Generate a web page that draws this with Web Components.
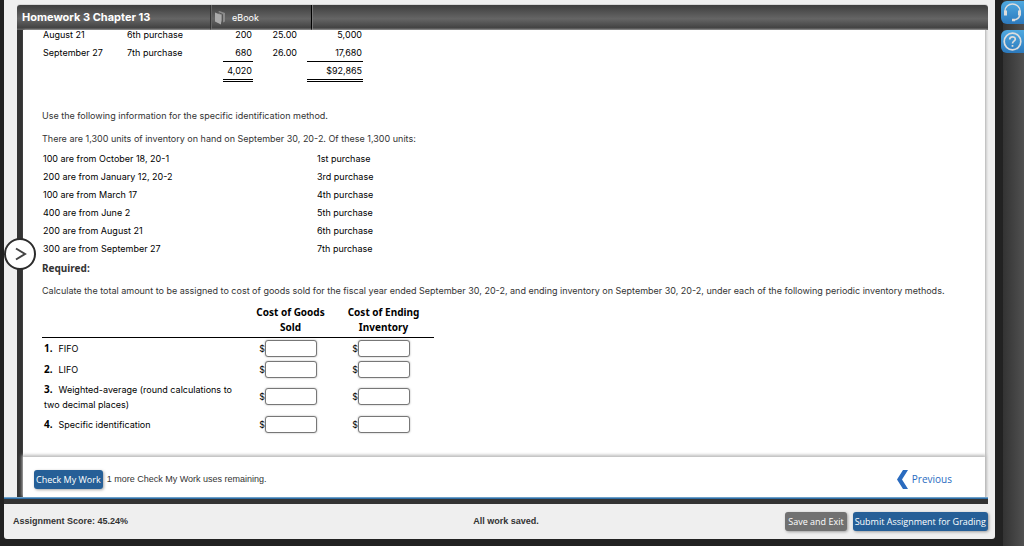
<!DOCTYPE html>
<html lang="en">
<head>
<meta charset="utf-8">
<title>Homework 3 Chapter 13</title>
<style>
html, body { height: 100%; margin: 0; }
body { background: #222; font: 9px/15px Inter, Verdana, sans-serif; color: #000; overflow: hidden; }
</style>
</head>
<body>
<app-shell>
  <assignment-panel>
    <title-bar slot="title" heading="Homework 3 Chapter 13"></title-bar>
    <purchase-table></purchase-table>
    <problem-text>Use the following information for the specific identification method.</problem-text>
    <problem-text>There are 1,300 units of inventory on hand on September 30, 20-2. Of these 1,300 units:</problem-text>
    <unit-table></unit-table>
    <problem-text strong>Required:</problem-text>
    <problem-text>Calculate the total amount to be assigned to cost of goods sold for the fiscal year ended September 30, 20-2, and ending inventory on September 30, 20-2, under each of the following periodic inventory methods.</problem-text>
    <answer-table></answer-table>
    <check-bar slot="footer"></check-bar>
  </assignment-panel>
  <status-bar slot="status"></status-bar>
  <help-rail slot="rail"></help-rail>
</app-shell>
<script>
const buttonCss = `
  button { font: 9px/19px "Open Sans", sans-serif; color: #fff; background: #265f97; border: 0; border-radius: 3px;
    height: 19px; padding: 0 2px; white-space: nowrap; box-shadow: 1px 1px 3px rgba(0,0,0,.35); }`;

function define(name, html) {
  customElements.define(name, class extends HTMLElement {
    constructor() {
      super();
      this.attachShadow({ mode: "open" }).innerHTML = typeof html === "function" ? html(this) : html;
    }
  });
}

define("app-shell", `
<style>
  :host { display: grid; grid-template-columns: 1fr 29px; height: 100vh; }
  .window { display: flex; flex-direction: column; min-width: 0; min-height: 0; margin: 0 0 7px 4px;
    background: #efefef; border-radius: 0 0 3px 3px; }
</style>
<div class="window"><slot></slot><slot name="status"></slot></div>
<slot name="rail"></slot>`);

define("assignment-panel", `
<style>
  :host { display: flex; flex-direction: column; flex: 1; min-height: 0; margin: 5px 7px 0 0; position: relative; }
  .body { display: flex; flex-direction: column; flex: 1; min-height: 0; margin-left: 13px; border-left: 6px solid #333; }
  .page { display: flex; flex-direction: column; flex: 1; min-height: 0; background: #fff; border-right: 1px solid #c4c4c4;
    margin-right: 2px; box-shadow: 1px 0 2px #ccc; }
  .scroll { flex: 1; min-height: 0; overflow: hidden; padding: 0 19px; }
  .content { margin-top: -5px; }
  .edge { height: 2px; background: #2f6ea6; border-top: 1px solid #6ea0c8; box-sizing: border-box; }
  .base { height: 5px; background: #333; }
  .toggle { position: absolute; left: 0; top: calc(50% - 17px); width: 32px; height: 32px; padding: 0; display: grid; place-items: center;
    border: 2px solid #2c2c2c; border-radius: 50%; background: #fff; }
</style>
<slot name="title"></slot>
<div class="body"><div class="page">
  <div class="scroll"><div class="content"><slot></slot></div></div>
  <slot name="footer"></slot>
</div></div>
<div class="edge"></div><div class="base"></div>
<button class="toggle" aria-label="Expand navigation">
  <svg width="14" height="16" viewBox="0 0 14 16" fill="none" stroke="#444" stroke-width="2"><path d="M3 2.500 12 8 3 13.500"/></svg>
</button>`);

define("title-bar", el => `
<style>
  :host { display: flex; height: 25px; margin-left: 13px; border-radius: 3px 3px 0 0; color: #fff;
    background: linear-gradient(#3e3e3e, #656565 55%, #444 90%, #666); box-shadow: 0 -1px 0 #d8d8d8; }
  h1 { flex: none; width: 188px; margin: 0; padding-left: 5px; font: bold 11px/25px Inter, Verdana, sans-serif; white-space: nowrap; }
  a { flex: none; box-sizing: border-box; width: 102px; display: flex; align-items: center; gap: 6px; padding-left: 4px; color: #fff;
    text-decoration: none; border-left: 1px solid #333; border-right: 1px solid #000; box-shadow: inset 1px 0 #666, 1px 0 #777; }
</style>
<h1>${el.getAttribute("heading")}</h1>
<a href="#ebook"><svg width="11" height="14" viewBox="0 0 11 14"><path d="M3 1 4.500 0 10 2v8.500L7 12z" fill="#8a8a8a"/><path d="M0 1.500 6 4v9.500L0 10.500z" fill="#aaa"/><path d="M2 1 7.500 3.300V12.500" fill="none" stroke="#555"/></svg>eBook</a>`);

const tableCss = `
  table { border-collapse: collapse; table-layout: fixed; }
  td, th { padding: 0 1px; height: 18px; line-height: 15px; text-align: left; font-weight: normal; }`;

define("purchase-table", `
<style>
  :host { display: block; margin-bottom: 26px; } ${tableCss}
  table { width: 321px; }
  .n { text-align: right; }
  .total .sum { height: 17px; border-top: 1px solid #000; border-bottom: 3px double #000; }
</style>
<table>
  <colgroup><col style="width:84px"><col style="width:97px"><col style="width:30px"><col style="width:45px"><col style="width:9px"><col style="width:56px"></colgroup>
  <tr><td>August 21</td><td>6th purchase</td><td class="n">200</td><td class="n">25.00</td><td></td><td class="n">5,000</td></tr>
  <tr><td>September 27</td><td>7th purchase</td><td class="n">680</td><td class="n">26.00</td><td></td><td class="n">17,680</td></tr>
  <tr class="total"><td></td><td></td><td class="n sum">4,020</td><td></td><td></td><td class="n sum">$92,865</td></tr>
</table>`);

define("problem-text", `
<style>
  :host { display: block; margin-bottom: 8px; color: #333; }
  :host([strong]) { font: bold 10px/15px "Noto Sans", sans-serif; margin: 4px 0 7px; }
  p { margin: 0; }
</style><p><slot></slot></p>`);

define("unit-table", `
<style>
  :host { display: block; margin-top: -5px; } ${tableCss}
  table { width: 400px; }
</style>
<table>
  <colgroup><col style="width:274px"><col></colgroup>
  ${[["100 are from October 18, 20-1", "1st"], ["200 are from January 12, 20-2", "3rd"], ["100 are from March 17", "4th"],
     ["400 are from June 2", "5th"], ["200 are from August 21", "6th"], ["300 are from September 27", "7th"]]
    .map(([units, nth]) => `<tr><td>${units}</td><td>${nth} purchase</td></tr>`).join("")}
</table>`);

define("answer-table", `
<style>
  :host { display: block; margin-top: -1px; } ${tableCss}
  table { width: 392px; }
  thead th { height: 32px; padding: 0; text-align: center; font: bold 10px/15px "Noto Sans", sans-serif; vertical-align: top; border-bottom: 1px solid #000; }
  thead th:last-child { padding-right: 4px; }
  tbody th { padding: 0 2px; }
  tbody td { padding: 0 0 0 16px; }
  tbody tr { height: 21px; }
  tbody tr.tall { height: 34px; }
  label { display: flex; align-items: center; justify-content: flex-end; width: 57px; }
  input { box-sizing: border-box; width: 52px; height: 17px; border: 1px solid #777; border-radius: 3px; padding: 0 3px; background: #fff;
    font: inherit; box-shadow: 0 0 2px #aaa; }
  b { margin-right: 6px; font: bold 10px/15px "Noto Sans", sans-serif; }
</style>
<table>
  <colgroup><col style="width:202px"><col style="width:93px"><col style="width:97px"></colgroup>
  <thead><tr><th></th><th>Cost of Goods<br>Sold</th><th>Cost of Ending<br>Inventory</th></tr></thead>
  <tbody>
  ${["FIFO", "LIFO", "Weighted-average (round calculations to<br>two decimal places)", "Specific identification"]
    .map((m, i) => `<tr${i === 2 ? ' class="tall"' : ""}><th><b>${i + 1}.</b>${m}</th>
      <td><label>$<input type="text" aria-label="Cost of goods sold, method ${i + 1}"></label></td>
      <td><label>$<input type="text" aria-label="Ending inventory, method ${i + 1}"></label></td></tr>`).join("")}
  </tbody>
</table>`);

define("check-bar", `
<style>
  :host { display: flex; align-items: center; height: 40px; padding: 5px 33px 0 11px; box-sizing: border-box; gap: 4px;
    box-shadow: 0 -1px 3px 1px #bbb; background: #fff; font: 9px/15px "Liberation Sans", Arial, sans-serif; color: #333; }
  ${buttonCss}
  a { margin-left: auto; display: flex; align-items: center; gap: 4px; color: #2a6bbf; text-decoration: none; font: 10px/19px "Open Sans", sans-serif; }
</style>
<button>Check My Work</button><span>1 more Check My Work uses remaining.</span>
<a href="#previous"><svg width="11" height="19" viewBox="0 0 11 19"><path d="M6 0h5L5 9.500 11 19H6L0 9.500z" fill="#2a6bbf"/></svg>Previous</a>`);

define("status-bar", `
<style>
  :host { display: grid; grid-template-columns: 47% auto 1fr; column-gap: 2px; align-items: center; height: 35px; padding: 0 7px 0 9px;
    font: bold 9px/15px "Liberation Sans", Arial, sans-serif; color: #333; }
  ${buttonCss}
  .actions { display: flex; gap: 6px; justify-content: flex-end; }
  .exit { background: #717171; padding: 0 3px; }
</style>
<span>Assignment Score: 45.24%</span><span>All work saved.</span>
<div class="actions"><button class="exit">Save and Exit</button><button>Submit Assignment for Grading</button></div>`);

define("help-rail", `
<style>
  :host { display: block; position: relative; margin-left: 8px; background: linear-gradient(90deg, #333, #505050); }
  nav { position: absolute; left: -2px; top: 1px; right: 0; display: grid; gap: 6px; }
  button { height: 23px; padding: 0; border: 0; border-radius: 6px 0 0 6px; background: linear-gradient(#4fa9e0, #2c79bd); display: grid; place-items: center; }
  svg { display: block; }
</style>
<nav aria-label="Help">
  <button aria-label="Support"><svg width="19" height="19" viewBox="0 0 19 19" fill="none" stroke="#ddd" stroke-width="1.500"><path d="M2 9V8a7.500 7 0 0 1 15 0v2c0 4-2 6.500-6 7"/><path d="M2.500 7.500v5M16.500 7.500v5" stroke-width="3"/><path d="M9 17h3" stroke-width="2.500"/></svg></button>
  <button aria-label="Help"><svg width="19" height="19" viewBox="0 0 19 19" fill="none" stroke="#ddd" stroke-width="1.700"><circle cx="9.500" cy="9.500" r="8.300"/><path d="M6.700 7.500c0-3.500 5.600-3.500 5.600-.3 0 2-2.800 2-2.800 4.300M9.500 13v1.800"/></svg></button>
</nav>`);
</script>
</body>
</html>
